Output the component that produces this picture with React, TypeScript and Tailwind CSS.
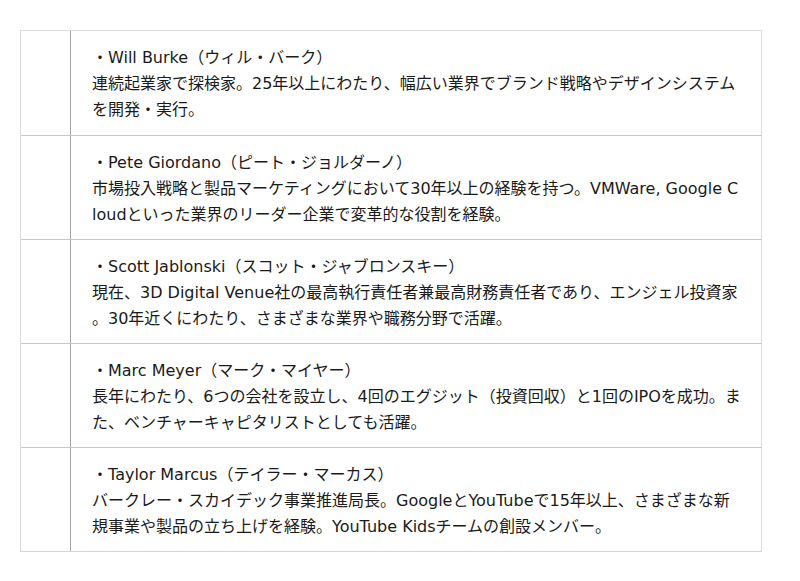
const members = [
  {
    name: "・Will Burke（ウィル・バーク）",
    bio: "連続起業家で探検家。25年以上にわたり、幅広い業界でブランド戦略やデザインシステムを開発・実行。",
  },
  {
    name: "・Pete Giordano（ピート・ジョルダーノ）",
    bio: "市場投入戦略と製品マーケティングにおいて30年以上の経験を持つ。VMWare, Google Cloudといった業界のリーダー企業で変革的な役割を経験。",
  },
  {
    name: "・Scott Jablonski（スコット・ジャブロンスキー）",
    bio: "現在、3D Digital Venue社の最高執行責任者兼最高財務責任者であり、エンジェル投資家。30年近くにわたり、さまざまな業界や職務分野で活躍。",
  },
  {
    name: "・Marc Meyer（マーク・マイヤー）",
    bio: "長年にわたり、6つの会社を設立し、4回のエグジット（投資回収）と1回のIPOを成功。また、ベンチャーキャピタリストとしても活躍。",
  },
  {
    name: "・Taylor Marcus（テイラー・マーカス）",
    bio: "バークレー・スカイデック事業推進局長。GoogleとYouTubeで15年以上、さまざまな新規事業や製品の立ち上げを経験。YouTube Kidsチームの創設メンバー。",
  },
];

export default function App() {
  return (
    <div
      className="min-h-[581px] bg-white pt-[30px] pl-[20px] text-[#1a1a1a]"
      style={{ fontFamily: '"DejaVu Sans", "Noto Sans CJK JP", sans-serif' }}
    >
      <div className="w-[742px] border border-[#dcdcdc] border-b-[#d4d4d4]">
        {members.map((m, i) => (
          <div
            key={m.name}
            className={`flex h-[104px] ${i > 0 ? "border-t border-[#c8c8c8]" : ""}`}
          >
            <div className="w-[50px] shrink-0 border-r border-[#a8a8a8]" />
            <div className="flex-1 pt-[14px] pb-[12px] pl-[21px] pr-[19px] text-[16px] leading-[26px] break-all [line-break:anywhere]">
              <div>{m.name}</div>
              <div>{m.bio}</div>
            </div>
          </div>
        ))}
      </div>
    </div>
  );
}
